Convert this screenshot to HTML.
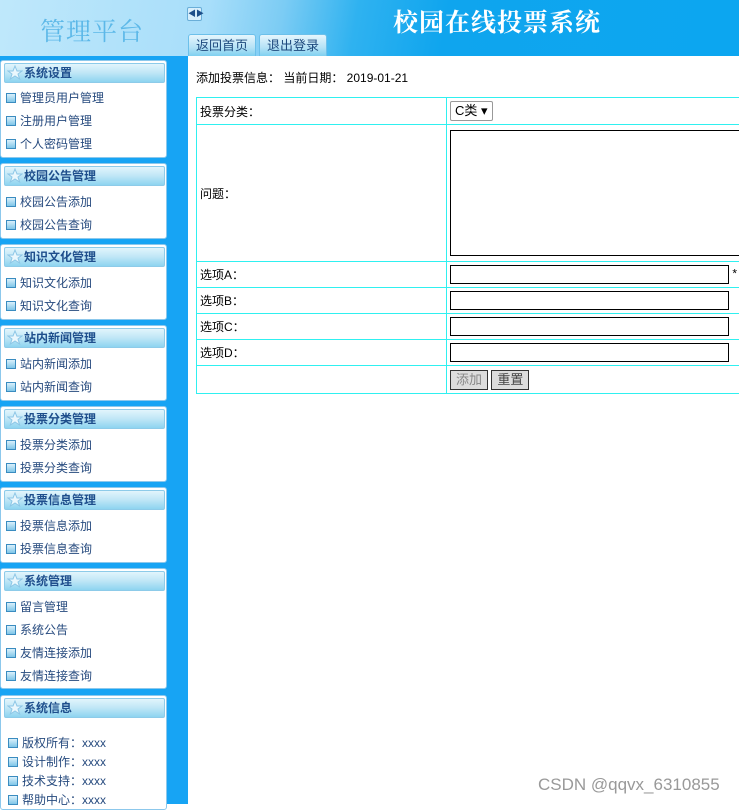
<!DOCTYPE html>
<html><head><meta charset="utf-8"><style>
*{margin:0;padding:0;box-sizing:border-box}
body{width:739px;height:804px;overflow:hidden;background:#fff;font-family:"Liberation Sans","Noto Sans CJK SC",sans-serif;font-size:12px;position:relative}
.hdr{position:absolute;left:0;top:0;width:739px;height:56px;background:linear-gradient(100deg,#bfe8fb 0%,#a8defa 28%,#7cccf4 38%,#2fb2f0 48%,#0fa5ee 60%,#0ca6f0 100%)}
.logo{position:absolute;left:40px;top:12px;font-family:"Noto Serif CJK SC",serif;font-size:25px;color:#5cb8e8;letter-spacing:1px}
.title{position:absolute;left:393px;top:3px;font-family:"Noto Serif CJK SC",serif;font-size:25px;font-weight:bold;color:#fff;letter-spacing:1px}
.tog{position:absolute;left:187px;top:7px;width:15px;height:14px;border:1px solid #6aaed8;border-radius:2px;background:#d8effc;font-size:8px;color:#1d4f8a;text-align:center;line-height:12px}
.tab{position:absolute;top:34px;height:22px;border:1px solid #6cc0ea;border-bottom:none;border-radius:3px 3px 0 0;background:linear-gradient(#e6f6fd,#b5e2f6 60%,#7fd0f0);color:#1e4a7e;font-size:13px;text-align:center;line-height:22px}
.side{position:absolute;left:0;top:56px;width:188px;height:748px;background:#17a4f4}
.pn{position:absolute;left:0;width:167px;background:#fff;border:1px solid #8cc8ec;border-radius:3px}
.pt{position:absolute;left:3px;top:2px;width:161px;height:20px;border:1px solid #8dcbe9;border-radius:2px;background:linear-gradient(#e2f5fc,#bfe6f6 50%,#8ed4f0);font-weight:bold;color:#1e4e8c;font-size:12px;line-height:19px;padding-left:19px}
.st{position:absolute;left:2px;top:1px}
.it{position:absolute;left:5px;color:#264a7e;font-size:12px;line-height:14px}
.it:before{content:"";display:inline-block;width:8px;height:8px;border:1px solid #3a8cc0;background:linear-gradient(#d9f0fb,#7fc6e8);margin-right:4px;vertical-align:-1px}
.main{position:absolute;left:188px;top:56px;width:551px;height:748px;background:#fff}
.info{position:absolute;left:196px;top:69px;font-size:12px;color:#000}
table{position:absolute;left:196px;top:97px;border-collapse:collapse;width:560px}
td{border:1px solid #2ff0f0;border-right:none;font-size:12px;color:#000;padding:0 3px;vertical-align:middle}
td.l{width:250px}
.ta{width:300px;height:126px;border:1px solid #000;display:block}
.in{width:279px;height:19px;border:1px solid #000;display:inline-block;vertical-align:middle}
.sel{display:inline-block;border:1px solid #999;border-radius:2px;height:20px;padding:0 4px;line-height:18px;font-size:13px}
.btn{display:inline-block;height:20px;border:1px solid #333;background:#ddd;color:#888;font-size:13px;line-height:18px;padding:0 5px;vertical-align:middle}
.wm{position:absolute;left:538px;top:775px;color:#999;font-size:17px}
</style></head><body>
<div class="hdr"></div>
<div class="logo">管理平台</div>
<div class="title">校园在线投票系统</div>
<div class="tog">◀▶</div>
<div class="tab" style="left:188px;width:68px">返回首页</div>
<div class="tab" style="left:259px;width:68px">退出登录</div>
<div class="side"></div>
<svg width="0" height="0" style="position:absolute"><defs><symbol id="s" viewBox="0 0 16 16"><path d="M8 1l2 5h5l-4 3 1.6 5L8 11l-4.6 3L5 9 1 6h5z" fill="#eaf7fd" stroke="#8cc6e6" stroke-width="1"/></symbol></defs></svg>

<div class="pn" style="top:60px;height:98px"><div class="pt"><svg class="st" width="16" height="16"><use href="#s"/></svg>系统设置</div>
<div class="it" style="top:30px">管理员用户管理</div><div class="it" style="top:53px">注册用户管理</div><div class="it" style="top:76px">个人密码管理</div></div>
<div class="pn" style="top:163px;height:76px"><div class="pt"><svg class="st" width="16" height="16"><use href="#s"/></svg>校园公告管理</div>
<div class="it" style="top:31px">校园公告添加</div><div class="it" style="top:54px">校园公告查询</div></div>
<div class="pn" style="top:244px;height:76px"><div class="pt"><svg class="st" width="16" height="16"><use href="#s"/></svg>知识文化管理</div>
<div class="it" style="top:31px">知识文化添加</div><div class="it" style="top:54px">知识文化查询</div></div>
<div class="pn" style="top:325px;height:76px"><div class="pt"><svg class="st" width="16" height="16"><use href="#s"/></svg>站内新闻管理</div>
<div class="it" style="top:31px">站内新闻添加</div><div class="it" style="top:54px">站内新闻查询</div></div>
<div class="pn" style="top:406px;height:76px"><div class="pt"><svg class="st" width="16" height="16"><use href="#s"/></svg>投票分类管理</div>
<div class="it" style="top:31px">投票分类添加</div><div class="it" style="top:54px">投票分类查询</div></div>
<div class="pn" style="top:487px;height:76px"><div class="pt"><svg class="st" width="16" height="16"><use href="#s"/></svg>投票信息管理</div>
<div class="it" style="top:31px">投票信息添加</div><div class="it" style="top:54px">投票信息查询</div></div>
<div class="pn" style="top:568px;height:121px"><div class="pt"><svg class="st" width="16" height="16"><use href="#s"/></svg>系统管理</div>
<div class="it" style="top:31px">留言管理</div><div class="it" style="top:54px">系统公告</div><div class="it" style="top:77px">友情连接添加</div><div class="it" style="top:100px">友情连接查询</div></div>
<div class="pn" style="top:695px;height:115px"><div class="pt"><svg class="st" width="16" height="16"><use href="#s"/></svg>系统信息</div>
<div class="it" style="top:40px;left:7px">版权所有：xxxx</div><div class="it" style="top:59px;left:7px">设计制作：xxxx</div><div class="it" style="top:78px;left:7px">技术支持：xxxx</div><div class="it" style="top:97px;left:7px">帮助中心：xxxx</div></div>

<div class="main"></div>
<div class="info">添加投票信息： 当前日期： 2019-01-21</div>
<table>
<tr style="height:27px"><td class="l">投票分类：</td><td><span class="sel">C类 ▾</span></td></tr>
<tr style="height:137px"><td class="l">问题：</td><td><span class="ta"></span></td></tr>
<tr style="height:26px"><td class="l">选项A：</td><td><span class="in"></span> *</td></tr>
<tr style="height:26px"><td class="l">选项B：</td><td><span class="in"></span></td></tr>
<tr style="height:26px"><td class="l">选项C：</td><td><span class="in"></span></td></tr>
<tr style="height:26px"><td class="l">选项D：</td><td><span class="in"></span></td></tr>
<tr style="height:28px"><td class="l"></td><td><span class="btn">添加</span> <span class="btn" style="color:#444">重置</span></td></tr>
</table>
<div class="wm">CSDN @qqvx_6310855</div>
</body></html>
